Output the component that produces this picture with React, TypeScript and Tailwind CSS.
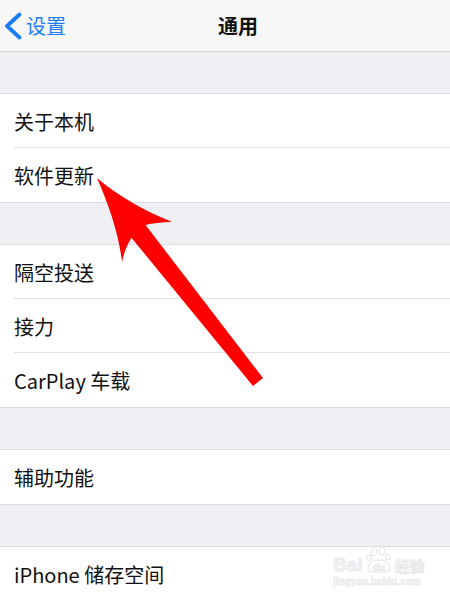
import React from "react";

const font = { fontFamily: '"Noto Sans CJK SC", "Noto Sans", sans-serif' };

function Row({ label, sep }: { label: string; sep?: boolean }) {
  return (
    <div className="relative h-[54px] flex items-center pl-[14px] pt-[2px] bg-white">
      <span className="text-[20px] leading-none text-[#111]">{label}</span>
      {sep && <div className="absolute left-[14px] right-0 bottom-0 h-px bg-[#e2e2e4]" />}
    </div>
  );
}

function Group({ items }: { items: string[] }) {
  return (
    <div className="border-y border-[#dcdce0] bg-white">
      {items.map((t, i) => (
        <Row key={t} label={t} sep={i < items.length - 1} />
      ))}
    </div>
  );
}

function Gap() {
  return <div className="h-[41px] bg-[#efeff4]" />;
}

export default function App() {
  return (
    <div className="relative w-[450px] h-[600px] overflow-hidden bg-[#efeff4]" style={font}>
      <div className="h-[52px] bg-[#f7f7f7] border-b border-[#d4d4d8] flex items-center relative">
        <div className="flex items-center pl-[3px] text-[#1a7cf9]">
          <svg width="20" height="28" viewBox="0 0 20 28">
            <path d="M16.5 2.5 L4 14 L16.5 25.5" fill="none" stroke="#1a7cf9" strokeWidth="3.8" strokeLinecap="round" strokeLinejoin="round" />
          </svg>
          <span className="text-[20px] leading-none ml-[3px]">设置</span>
        </div>
        <div className="absolute left-0 right-0 text-center text-[20px] font-bold leading-none text-[#111] pl-[26px]">通用</div>
      </div>
      <Gap />
      <Group items={["关于本机", "软件更新"]} />
      <Gap />
      <Group items={["隔空投送", "接力", "CarPlay 车载"]} />
      <Gap />
      <Group items={["辅助功能"]} />
      <Gap />
      <Group items={["iPhone 储存空间"]} />

      <svg className="absolute left-0 top-0" width="450" height="600" viewBox="0 0 450 600">
        <polygon points="144,223 130,236 253,386 263,378" fill="#ff0000" />
        <path
          d="M97,178 C109,205 119,235 122,262 C124,252 128,242 134,234 L142,226 C152,223 162,222 172,222 C150,213 120,198 97,178 Z"
          fill="#ff0000"
        />
      </svg>

      <div className="absolute left-[333px] top-[546px] w-[92px] text-[#f3f3f5]" style={{ fontFamily: '"Liberation Sans", "Noto Sans CJK SC", sans-serif' }}>
        <div className="flex items-end">
          <span className="text-[19px] font-bold leading-none" style={{ WebkitTextStroke: "0.6px #e2e2e6" }}>Bai</span>
          <svg width="30" height="28" viewBox="0 0 30 28" className="mx-[1px]">
            <g fill="none" stroke="#e2e2e6" strokeWidth="1">
              <ellipse cx="10" cy="6" rx="3" ry="4" />
              <ellipse cx="18" cy="5" rx="3" ry="4" />
              <ellipse cx="5" cy="12" rx="2.5" ry="3" />
              <ellipse cx="24" cy="11" rx="2.5" ry="3" />
              <path d="M4,24 C4,16 10,14 15,14 C20,14 26,16 26,24 C26,27 4,27 4,24 Z" />
            </g>
            <text x="15" y="25" textAnchor="middle" fontSize="10" fontWeight="bold" fill="#f3f3f5" stroke="#e2e2e6" strokeWidth="0.5">du</text>
          </svg>
          <span className="text-[15px] font-bold leading-none" style={{ WebkitTextStroke: "0.6px #e2e2e6" }}>经验</span>
        </div>
        <div className="text-[10px] leading-none mt-[3px] font-bold" style={{ WebkitTextStroke: "0.4px #e2e2e6" }}>jingyan.baidu.com</div>
      </div>
    </div>
  );
}
